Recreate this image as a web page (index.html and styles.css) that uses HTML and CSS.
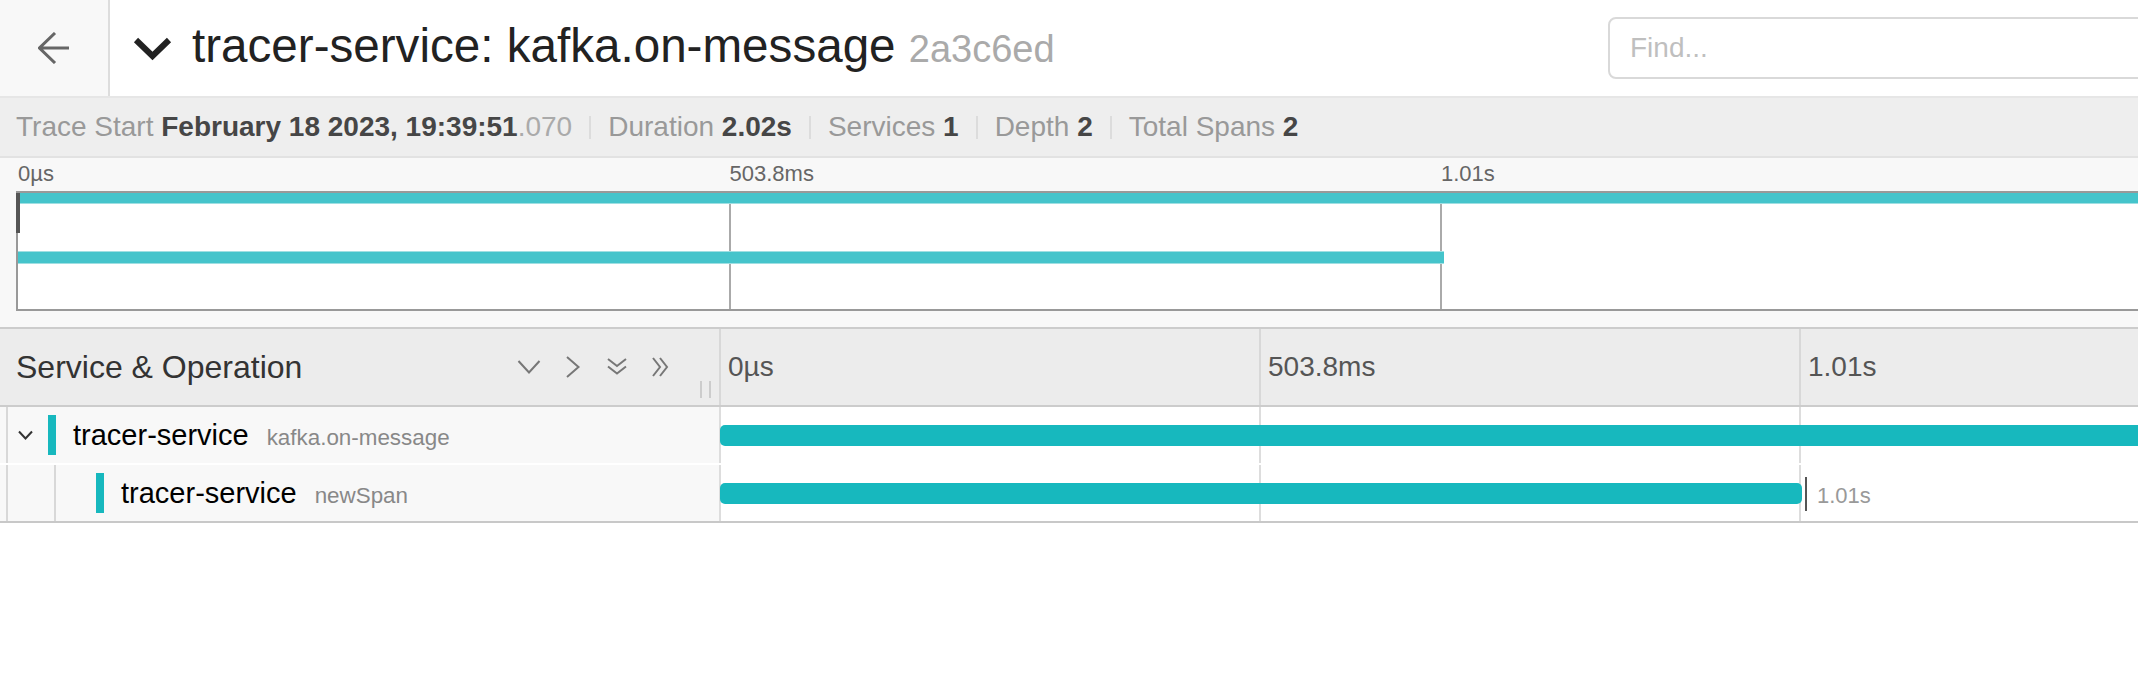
FILE: index.html
```html
<!DOCTYPE html>
<html lang="en">
<head>
<meta charset="utf-8">
<title>tracer-service: kafka.on-message</title>
<link rel="stylesheet" href="styles.css">
</head>
<body>
<div class="page">
  <header class="hdr">
    <a class="back" href="#" aria-label="Back">
      <svg viewBox="0 0 32 32" class="back-ico"><path d="M1 16H31M17 1L1.5 16L17 31"/></svg>
    </a>
    <div class="title">
      <svg viewBox="0 0 46 46" class="title-chev"><path d="M6 15L22.5 31L39 15"/></svg>
      <h1 class="title-text">tracer-service: kafka.on-message <span class="tid">2a3c6ed</span></h1>
    </div>
    <div class="search">
      <input class="search-input" type="text" placeholder="Find...">
    </div>
  </header>

  <div class="summary">
    <span class="item"><span class="lbl">Trace Start</span> <b>February 18 2023, 19:39:51</b><span class="ms">.070</span></span>
    <span class="sep"></span>
    <span class="item"><span class="lbl">Duration</span> <b>2.02s</b></span>
    <span class="sep"></span>
    <span class="item"><span class="lbl">Services</span> <b>1</b></span>
    <span class="sep"></span>
    <span class="item"><span class="lbl">Depth</span> <b>2</b></span>
    <span class="sep"></span>
    <span class="item"><span class="lbl">Total Spans</span> <b>2</b></span>
  </div>

  <section class="mini">
    <div class="mini-labels">
      <span class="mini-label" style="left:0%">0µs</span>
      <span class="mini-label" style="left:25%">503.8ms</span>
      <span class="mini-label" style="left:50%">1.01s</span>
    </div>
    <div class="mini-canvas">
      <span class="mini-line" style="left:25%"></span>
      <span class="mini-line" style="left:50%"></span>
      <span class="mini-line" style="left:75%"></span>
      <span class="mini-bar mini-bar-1" style="left:0%;width:100%"></span>
      <span class="mini-bar mini-bar-2" style="left:0%;width:calc(50% + 4px)"></span>
      <span class="mini-handle"></span>
    </div>
  </section>

  <section class="tl">
    <div class="tl-head">
      <div class="col-name">
        <span class="col-title">Service &amp; Operation</span>
        <div class="tools">
          <svg viewBox="0 0 28 28"><path d="M3.5 8L14 19.5L24.5 8"/></svg>
          <svg viewBox="0 0 28 28"><path d="M8 4L19.5 14L8 24"/></svg>
          <svg viewBox="0 0 28 28"><path d="M5 6L14 13L23 6M5 13.5L14 20.5L23 13.5"/></svg>
          <svg viewBox="0 0 28 28"><path d="M6 5L13 14L6 23M13 5L20 14L13 23"/></svg>
        </div>
        <span class="resizer"></span>
      </div>
      <div class="col-time">
        <div class="tick" style="left:0%"><span class="tick-label">0µs</span></div>
        <div class="tick" style="left:25%"><span class="tick-label">503.8ms</span></div>
        <div class="tick" style="left:50%"><span class="tick-label">1.01s</span></div>
        <div class="tick" style="left:75%"></div>
      </div>
    </div>

    <div class="rows">
      <div class="row">
        <div class="name-cell">
          <span class="indent">
            <svg viewBox="0 0 15 10" class="toggle"><path d="M1 1.5L7.5 8.5L14 1.5"/></svg>
          </span>
          <span class="color"></span>
          <span class="label"><span class="svc">tracer-service</span><span class="op">kafka.on-message</span></span>
        </div>
        <div class="time-cell">
          <span class="gline" style="left:0%"></span>
          <span class="gline" style="left:25%"></span>
          <span class="gline" style="left:50%"></span>
          <span class="gline" style="left:75%"></span>
          <span class="bar" style="left:0%;width:100%"></span>
        </div>
      </div>
      <div class="row">
        <div class="name-cell">
          <span class="indent"></span>
          <span class="indent"></span>
          <span class="color"></span>
          <span class="label"><span class="svc">tracer-service</span><span class="op">newSpan</span></span>
        </div>
        <div class="time-cell">
          <span class="gline" style="left:0%"></span>
          <span class="gline" style="left:25%"></span>
          <span class="gline" style="left:50%"></span>
          <span class="gline" style="left:75%"></span>
          <span class="bar" style="left:0%;width:calc(50% + 2px)"></span>
          <span class="bar-label" style="left:calc(50% + 5px)">1.01s</span>
        </div>
      </div>
    </div>
  </section>
</div>
</body>
</html>
```

FILE: styles.css
```css
html, body {
  margin: 0;
  padding: 0;
  overflow: hidden;
  background: #fff;
}

body {
  font-family: "Liberation Sans", Arial, Helvetica, sans-serif;
}

.page {
  width: 2880px;
}

/* ---------- header ---------- */
.hdr {
  display: flex;
  align-items: center;
  height: 96px;
  border-bottom: 2px solid #e6e6e6;
}

.back {
  flex: 0 0 108px;
  height: 96px;
  display: flex;
  align-items: center;
  justify-content: center;
  background: #f8f8f8;
  border-right: 2px solid #ddd;
}

.back-ico {
  width: 32px;
  height: 32px;
  fill: none;
  stroke: #666;
  stroke-width: 3;
}

.title {
  flex: 0 0 1498px;
  box-sizing: border-box;
  display: flex;
  align-items: center;
  padding-left: 20px;
}

.title-chev {
  width: 46px;
  height: 46px;
  margin-right: 16px;
  fill: none;
  stroke: #222;
  stroke-width: 6;
}

.title-text {
  margin: 0;
  padding-bottom: 4px;
  font-size: 47.6px;
  font-weight: normal;
  color: #222;
  white-space: nowrap;
  line-height: 1.15;
}

.tid {
  font-size: 38px;
  color: #aaa;
}

.search {
  flex: 0 0 auto;
}

.search-input {
  width: 700px;
  height: 62px;
  box-sizing: border-box;
  border: 2px solid #d9d9d9;
  border-radius: 8px;
  padding: 0 20px;
  font-family: "Liberation Sans", Arial, sans-serif;
  font-size: 28px;
  color: #333;
  outline: none;
  background: #fff;
}

.search-input::placeholder {
  color: #bfbfbf;
}

/* ---------- summary ---------- */
.summary {
  display: flex;
  align-items: center;
  height: 58px;
  padding-left: 16px;
  background: #eee;
  border-bottom: 2px solid #e2e2e2;
  font-size: 28px;
  color: #999;
  white-space: nowrap;
}

.summary b {
  color: #464646;
}

.ms {
  color: #aaa;
}

.sep {
  width: 2px;
  height: 23px;
  background: #dcdcdc;
  margin: 0 17px;
}

/* ---------- minimap ---------- */
.mini {
  background: #f8f8f8;
  padding: 0 16px 16px;
  border-bottom: 2px solid #ccc;
}

.mini-labels {
  position: relative;
  height: 33px;
  margin-left: 2px;
  font-size: 22px;
  color: #666;
}

.mini-label {
  position: absolute;
  top: 5px;
  line-height: 22px;
  white-space: nowrap;
}

.mini-canvas {
  position: relative;
  height: 116px;
  border: 2px solid #999;
  background: #fff;
}

.mini-line {
  position: absolute;
  top: 0;
  bottom: 0;
  width: 2px;
  background: #aaa;
}

.mini-bar {
  position: absolute;
  height: 10px;
  background: #45c4cb;
  border-bottom: 1px solid #9fdfe2;
}

.mini-bar-1 {
  top: 0;
}

.mini-bar-2 {
  top: 58px;
  height: 11px;
  border-top: 1px solid #9fdfe2;
}

.mini-handle {
  position: absolute;
  left: -2px;
  top: 0;
  width: 4px;
  height: 40px;
  background: #555;
}

/* ---------- timeline ---------- */
.tl-head {
  display: flex;
  height: 76px;
  background: #ececec;
  border-bottom: 2px solid #ccc;
}

.col-name {
  flex: 0 0 720px;
  box-sizing: border-box;
  position: relative;
  display: flex;
  align-items: center;
  padding-left: 16px;
  font-size: 32px;
  color: #333;
}

.col-title {
  white-space: nowrap;
}

.tools {
  margin-left: auto;
  padding-right: 45px;
  display: flex;
  gap: 16px;
}

.tools svg {
  width: 28px;
  height: 28px;
  fill: none;
  stroke: #777;
  stroke-width: 2;
}

.resizer {
  position: absolute;
  right: 9px;
  bottom: 7px;
  width: 7px;
  height: 17px;
  border-left: 2px solid #ccc;
  border-right: 2px solid #ccc;
}

.col-time {
  flex: 0 0 2160px;
  position: relative;
}

.tick {
  position: absolute;
  top: 0;
  bottom: 0;
}

.tick::before {
  content: "";
  position: absolute;
  left: -1px;
  top: 0;
  bottom: 0;
  width: 2px;
  background: #d8d8d8;
}

.tick-label {
  display: block;
  padding-left: 8px;
  font-size: 28px;
  line-height: 76px;
  color: #555;
  white-space: nowrap;
}

.rows {
  border-bottom: 2px solid #c8c8c8;
}

.row {
  display: flex;
  height: 56px;
}

.row + .row {
  border-top: 2px solid #fff;
}

.name-cell {
  flex: 0 0 720px;
  display: flex;
  align-items: center;
  background: #f8f8f8;
  white-space: nowrap;
}

.indent {
  align-self: stretch;
  width: 40px;
  margin-left: 6px;
  border-left: 2px solid #d8d8d8;
  display: flex;
  align-items: center;
}

.toggle {
  width: 15px;
  height: 10px;
  margin-left: 10px;
  fill: none;
  stroke: #333;
  stroke-width: 2;
}

.color {
  width: 8px;
  height: 40px;
  background: #17b8be;
}

.label {
  margin-left: 17px;
}

.svc {
  font-size: 29px;
  color: #000;
}

.op {
  margin-left: 18px;
  font-size: 22.4px;
  color: #888;
}

.time-cell {
  flex: 0 0 2160px;
  position: relative;
  background: #fff;
}

.gline {
  position: absolute;
  top: 0;
  bottom: 0;
  width: 2px;
  margin-left: -1px;
  background: #ddd;
}

.bar {
  position: absolute;
  top: 18px;
  height: 21px;
  background: #17b8be;
  border-radius: 5px;
}

.bar-label {
  position: absolute;
  top: 12px;
  height: 34px;
  border-left: 2px solid #555;
  padding-left: 10px;
  padding-top: 2px;
  box-sizing: border-box;
  font-size: 22px;
  line-height: 34px;
  color: #999;
  white-space: nowrap;
}
```
